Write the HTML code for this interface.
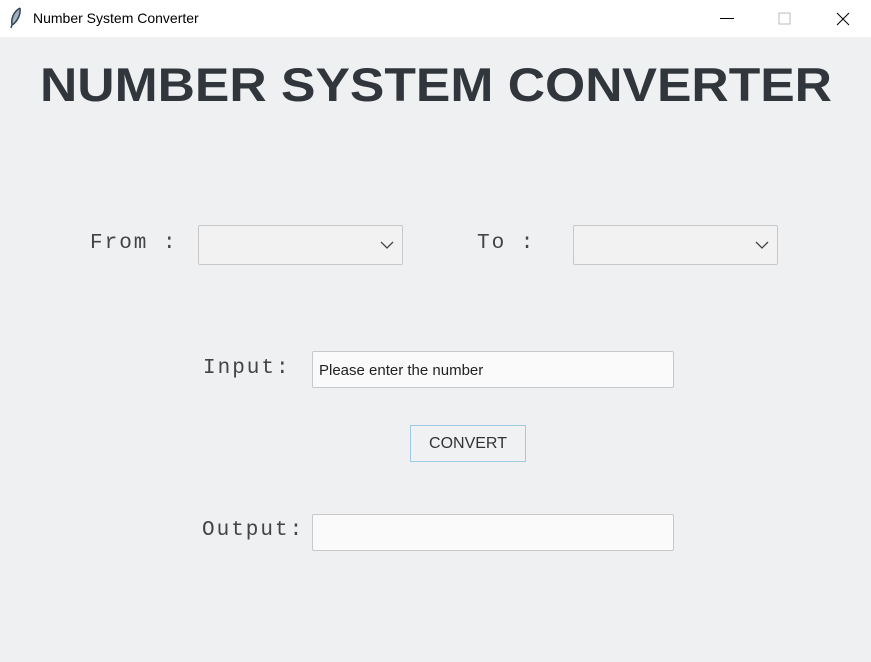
<!DOCTYPE html>
<html><head><style>
body{margin:0;width:871px;height:662px;background:#eff0f2;position:relative;overflow:hidden;font-family:"Liberation Sans",sans-serif}
.tb{position:absolute;left:0;top:0;width:871px;height:37px;background:#fff}
.tb .t{position:absolute;left:33px;top:10px;font-size:14px;color:#000}
.lbl{position:absolute;font-family:"Liberation Mono",monospace;font-size:21px;letter-spacing:2px;color:#444}
.box{position:absolute;background:#fafafa;border:1px solid #c8c8c8;border-radius:2px;box-sizing:border-box}
.cb{background:#f2f2f3}
.btn{position:absolute;left:410px;top:425px;width:116px;height:37px;border:1px solid #9fcbe0;box-sizing:border-box;background:#f0f1f3;font-size:16px;color:#333;text-align:center;line-height:35px}
</style></head><body>
<div class="tb">
<svg style="position:absolute;left:8px;top:7px" width="16" height="22"><path d="M12 1 C5 5 3 12 4 18 L3 21 M12 1 C13 8 9 15 4 18" stroke="#345" stroke-width="1.5" fill="#9ab"/></svg>
<div class="t">Number System Converter</div>
<svg style="position:absolute;left:720px;top:12px" width="140" height="14"><path d="M0 6.5H14" stroke="#000"/><path d="M59 1h11v11h-11z" stroke="#bbb" fill="none"/><path d="M117 1l12 12M129 1l-12 12" stroke="#000"/></svg>
</div>
<svg style="position:absolute;left:0;top:55px" width="871" height="60"><text x="40" y="46" textLength="792" lengthAdjust="spacingAndGlyphs" font-family="Liberation Sans" font-weight="bold" font-size="47" fill="#30363b">NUMBER SYSTEM CONVERTER</text></svg>
<div class="lbl" style="left:90px;top:232px">From :</div>
<div class="box cb" style="left:198px;top:225px;width:205px;height:40px"><svg style="position:absolute;right:8px;top:15px" width="14" height="9"><path d="M1 1l6 6 6-6" stroke="#444" fill="none" stroke-width="1.3"/></svg></div>
<div class="lbl" style="left:477px;top:232px">To :</div>
<div class="box cb" style="left:573px;top:225px;width:205px;height:40px"><svg style="position:absolute;right:8px;top:15px" width="14" height="9"><path d="M1 1l6 6 6-6" stroke="#444" fill="none" stroke-width="1.3"/></svg></div>
<div class="lbl" style="left:203px;top:357px">Input:</div>
<div class="box" style="left:312px;top:351px;width:362px;height:37px;font-size:15px;color:#222;padding:10px 6px">Please enter the number</div>
<div class="btn">CONVERT</div>
<div class="lbl" style="left:202px;top:519px">Output:</div>
<div class="box" style="left:312px;top:514px;width:362px;height:37px"></div>
</body></html>
